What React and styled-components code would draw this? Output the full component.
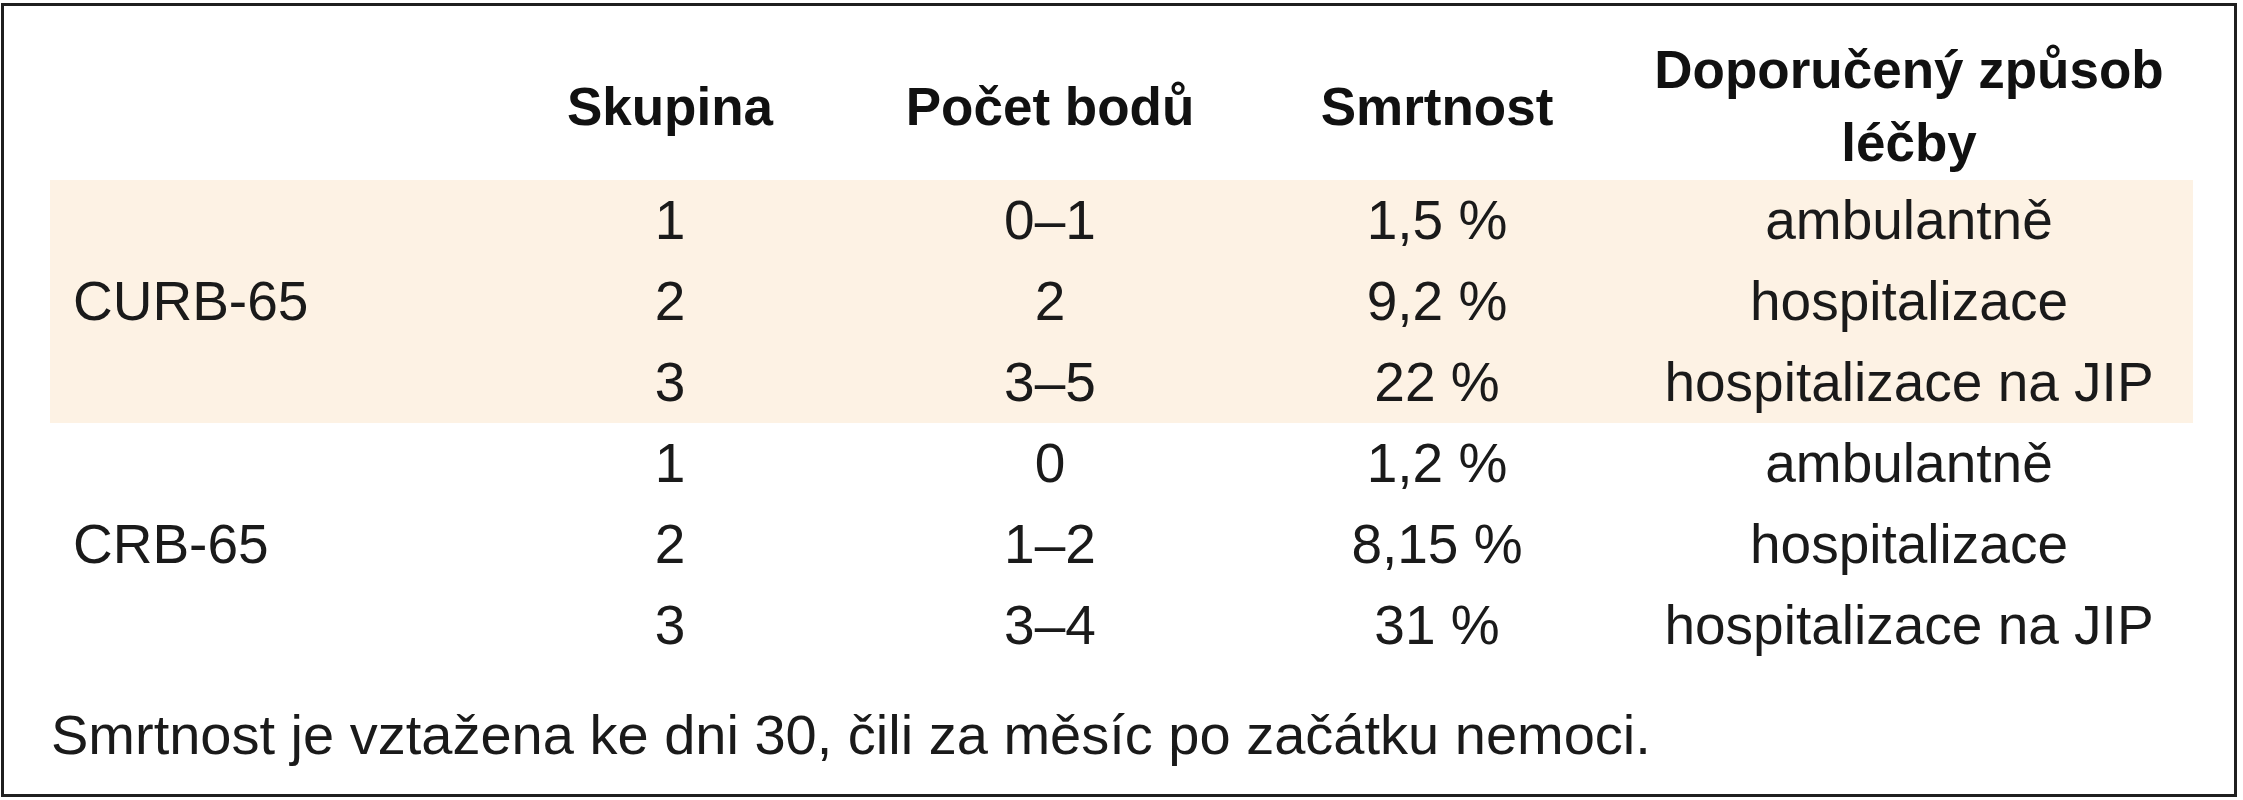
import React from "react";
import styled, { createGlobalStyle } from "styled-components";

const GlobalStyle = createGlobalStyle`
  html, body {
    margin: 0;
    padding: 0;
    background: #ffffff;
  }
  body {
    font-family: "Liberation Sans", Arial, sans-serif;
    color: #1a1a1a;
  }
`;

const Frame = styled.div`
  box-sizing: border-box;
  width: 2236px;
  margin: 3px 0 0 1px;
  border: 3px solid #1f1f1f;
  padding: 0 41px 0 46px;
`;

const Grid = styled.div`
  display: grid;
  grid-template-columns: 430px 380px 380px 394px 550px;
  background: ${(p) => (p.$shaded ? "#fdf2e4" : "transparent")};
`;

const HeadRow = styled(Grid)`
  padding: 27px 0 1px;
`;

const HeadCell = styled.div`
  align-self: center;
  text-align: center;
  font-size: 53px;
  font-weight: 700;
  line-height: 73px;
  color: #111111;
`;

const Label = styled.div`
  grid-column: 1;
  grid-row: 1 / span 3;
  align-self: center;
  padding-left: 23px;
  font-size: 55px;
  line-height: 81px;
`;

const Cell = styled.div`
  grid-column: ${(p) => p.$col};
  text-align: center;
  font-size: 55px;
  line-height: 81px;
  white-space: nowrap;
`;

const Footer = styled.div`
  padding: 38px 0 28px 1px;
  font-size: 56px;
  line-height: 62px;
`;

const groups = [
  {
    name: "CURB-65",
    shaded: true,
    rows: [
      ["1", "0–1", "1,5 %", "ambulantně"],
      ["2", "2", "9,2 %", "hospitalizace"],
      ["3", "3–5", "22 %", "hospitalizace na JIP"],
    ],
  },
  {
    name: "CRB-65",
    shaded: false,
    rows: [
      ["1", "0", "1,2 %", "ambulantně"],
      ["2", "1–2", "8,15 %", "hospitalizace"],
      ["3", "3–4", "31 %", "hospitalizace na JIP"],
    ],
  },
];

export default function App() {
  return (
    <>
      <GlobalStyle />
      <Frame>
        <HeadRow>
          <HeadCell />
          <HeadCell>Skupina</HeadCell>
          <HeadCell>Počet bodů</HeadCell>
          <HeadCell>Smrtnost</HeadCell>
          <HeadCell>
            Doporučený způsob
            <br />
            léčby
          </HeadCell>
        </HeadRow>

        {groups.map((g) => (
          <Grid key={g.name} $shaded={g.shaded}>
            <Label>{g.name}</Label>
            {g.rows.map((r, i) =>
              r.map((v, j) => (
                <Cell key={`${i}-${j}`} $col={j + 2} style={{ gridRow: i + 1 }}>
                  {v}
                </Cell>
              ))
            )}
          </Grid>
        ))}

        <Footer>
          Smrtnost je vztažena ke dni 30, čili za měsíc po začátku nemoci.
        </Footer>
      </Frame>
    </>
  );
}
